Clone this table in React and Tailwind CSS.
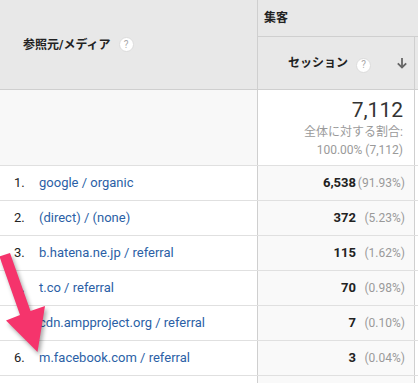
const rows = [
  { rank: '1.', source: 'google / organic', sessions: '6,538', pct: '(91.93%)' },
  { rank: '2.', source: '(direct) / (none)', sessions: '372', pct: '(5.23%)' },
  { rank: '3.', source: 'b.hatena.ne.jp / referral', sessions: '115', pct: '(1.62%)' },
  { rank: '4.', source: 't.co / referral', sessions: '70', pct: '(0.98%)' },
  { rank: '5.', source: 'cdn.ampproject.org / referral', sessions: '7', pct: '(0.10%)' },
  { rank: '6.', source: 'm.facebook.com / referral', sessions: '3', pct: '(0.04%)' },
];

const font = "font-['Roboto','Noto_Sans_CJK_JP',sans-serif]";

// little circled "?" next to column titles
const HelpIcon = () => (
  <span className="inline-flex items-center justify-center w-[15px] h-[15px] rounded-full bg-white border border-[#dcdcdc] text-[10px] text-[#aaa] font-normal leading-none">
    ?
  </span>
);

const App = () => {
  return (
    <div className={`relative w-[418px] h-[383px] overflow-hidden bg-white text-[#222] ${font}`}>
      {/* Header */}
      <div className="flex h-[90px] bg-[#e8e8e8] border-b border-[#cfcfcf]">
        <div className="w-[258px] shrink-0 border-r border-[#cfcfcf] flex items-center pl-[23px] gap-[8px]">
          <span className="text-[12px] font-bold">参照元/メディア</span>
          <HelpIcon />
        </div>
        <div className="flex-1 flex flex-col">
          <div className="h-[37px] shrink-0 border-b border-[#cfcfcf] flex items-center pl-[6px]">
            <span className="text-[12px] font-bold">集客</span>
          </div>
          <div className="flex-1 flex">
            <div className="w-[157px] shrink-0 border-r border-[#cfcfcf] flex items-center pl-[30px] pr-[6px]">
              <span className="text-[12px] font-bold">セッション</span>
              <span className="ml-[8px]">
                <HelpIcon />
              </span>
              <svg className="ml-auto" width="12" height="12" viewBox="0 0 12 12" fill="none" stroke="#666" strokeWidth="1.8">
                <path d="M6 1v9.5" />
                <path d="M1.8 6.3 6 10.5l4.2-4.2" />
              </svg>
            </div>
            <div className="flex-1" />
          </div>
        </div>
      </div>

      {/* Totals */}
      <div className="flex h-[76px] border-b border-[#e0e0e0]">
        <div className="w-[258px] shrink-0 bg-[#f8f8f8] border-r border-[#cfcfcf]" />
        <div className="w-[157px] shrink-0 border-r border-[#cfcfcf] flex flex-col items-end pr-[11px] pt-[7px]">
          <span className="text-[21px] leading-[26px] text-[#333]">7,112</span>
          <span className="text-[12px] leading-[19px] text-[#9a9a9a]">全体に対する割合:</span>
          <span className="text-[12px] leading-[17px] text-[#9a9a9a]">100.00% (7,112)</span>
        </div>
        <div className="flex-1" />
      </div>

      {/* Rows */}
      {rows.map((r) => (
        <div key={r.rank} className="flex h-[35px] border-b border-[#e0e0e0] text-[13px]">
          <div className="w-[258px] shrink-0 border-r border-[#cfcfcf] flex items-center">
            <span className="w-[39px] pl-[14px] shrink-0">{r.rank}</span>
            <span className="text-[#2b5fa6] whitespace-nowrap">{r.source}</span>
          </div>
          <div className="w-[157px] shrink-0 bg-[#f9f9f9] border-r border-[#cfcfcf] flex items-center justify-end pr-[9px]">
            <span className="font-bold">{r.sessions}</span>
            <span className="w-[49px] text-right text-[12px] text-[#999]">{r.pct}</span>
          </div>
          <div className="flex-1" />
        </div>
      ))}

      {/* next row, cut off by the window */}
      <div className="flex h-[35px]">
        <div className="w-[258px] shrink-0 border-r border-[#cfcfcf]" />
        <div className="w-[157px] shrink-0 bg-[#f9f9f9] border-r border-[#cfcfcf]" />
        <div className="flex-1" />
      </div>

      {/* Pink pointer arrow */}
      <svg
        className="absolute left-0 top-[240px] pointer-events-none drop-shadow-[2px_3px_2px_rgba(0,0,0,0.35)]"
        width="60"
        height="130"
        viewBox="0 0 60 130"
      >
        <polygon
          points="-0.5,16.5 10,13 30.5,71 45,66 37.5,112 6,80.5 20,75"
          fill="#f5346c"
        />
      </svg>
    </div>
  );
};

export default App;
